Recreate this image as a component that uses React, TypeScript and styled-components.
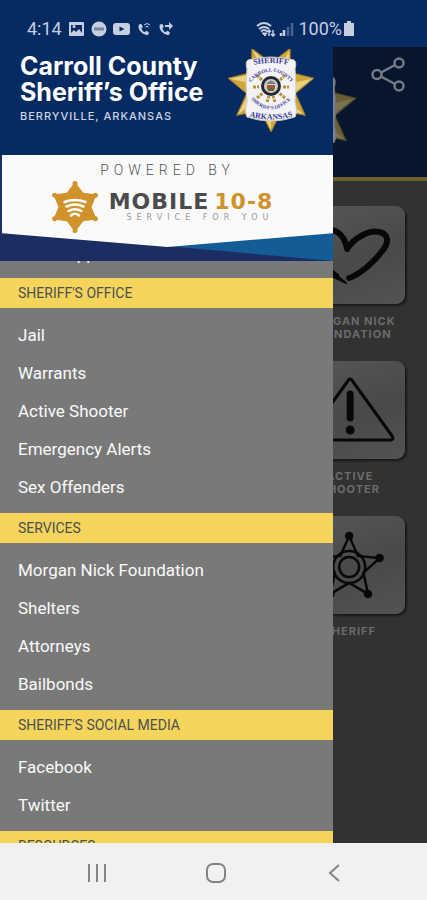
import React from "react";
import styled, { createGlobalStyle } from "styled-components";

const GlobalStyle = createGlobalStyle`
  *, *::before, *::after { box-sizing: border-box; }
  body {
    margin: 0;
    background: #323232;
    font-family: Roboto, "Liberation Sans", sans-serif;
  }
`;

const colors = {
  navy: "#062a62",
  gold: "#f5d45c",
  drawer: "#797979",
  status: "#c6cee0",
};

const Screen = styled.div`
  display: flex;
  flex-direction: column;
  height: 100vh;
  overflow: hidden;
`;

const StatusBar = styled.header`
  display: flex;
  align-items: center;
  justify-content: space-between;
  flex: none;
  height: 47px;
  padding: 10px 72px 0 27px;
  background: ${colors.navy};
  color: ${colors.status};
  font-size: 18px;
  line-height: 20px;
`;

const StatusGroup = styled.div<{ $gap: number }>`
  display: flex;
  align-items: center;
  gap: ${(p) => p.$gap}px;
`;

const Battery = styled.div`
  display: flex;
  align-items: center;
  gap: 1px;
`;

const Stage = styled.div`
  position: relative;
  flex: 1;
  min-height: 0;
  overflow: hidden;
`;

const Home = styled.main`
  height: 100%;
  background: #323232;
`;

const HomeHeader = styled.div`
  position: relative;
  display: flex;
  justify-content: flex-end;
  align-items: flex-start;
  height: 134px;
  padding: 9px 20px 0;
  border-bottom: 4px solid #6d5f2b;
  background: #07152d;
  overflow: hidden;
`;

const HomeBadge = styled.div`
  position: absolute;
  top: 18px;
  right: 70px;
  width: 100px;
  opacity: 0.5;
`;

const IconButton = styled.button`
  display: flex;
  padding: 0;
  border: 0;
  background: none;
  color: #747b87;
`;

const Tiles = styled.div`
  display: grid;
  grid-template-columns: repeat(3, minmax(0, 1fr));
  gap: 20px 26px;
  padding: 25px 22px;
`;

const Tile = styled.button`
  grid-column: 3;
  display: flex;
  flex-direction: column;
  align-items: center;
  gap: 11px;
  min-height: 135px;
  padding: 0;
  border: 0;
  background: none;
  color: #6b6b6b;
  font-family: Inter, sans-serif;
  font-size: 11px;
  font-weight: 700;
  line-height: 13px;
  letter-spacing: 1px;
  white-space: pre-line;
`;

const TileFace = styled.span`
  display: block;
  width: 100%;
  height: 98px;
  border-radius: 9px;
  background: linear-gradient(160deg, #565858, #484a4a 55%, #525454);
  box-shadow: 2px 2px 2px #1a1a1a;
`;

const Drawer = styled.aside`
  position: absolute;
  top: 0;
  bottom: 0;
  left: 0;
  display: flex;
  flex-direction: column;
  width: 78%;
  background: ${colors.drawer};
`;

const DrawerHeader = styled.div`
  display: flex;
  justify-content: space-between;
  flex: none;
  height: 108px;
  padding: 2px 18px 0 20px;
  background: ${colors.navy};
  color: #fff;
`;

const Titles = styled.div`
  padding-top: 4px;
  font-family: Inter, sans-serif;
  white-space: nowrap;
`;

const Title = styled.h1`
  margin: 0;
  font-size: 25px;
  font-weight: 700;
  line-height: 26px;
`;

const Place = styled.p`
  margin: 3px 0 0;
  color: #ccd4e4;
  font-size: 11px;
  font-weight: 500;
  line-height: 16px;
  letter-spacing: 1px;
`;

const DrawerBadge = styled.div`
  flex: none;
  width: 88px;
  margin-left: -20px;
`;

const Banner = styled.section`
  position: relative;
  flex: none;
  height: 106px;
  background: #1b2d63;
  &::before {
    content: "";
    position: absolute;
    inset: 76px 0 0 50%;
    background: #145c96;
    clip-path: polygon(0 50%, 100% 0, 100% 100%);
  }
`;

const BannerPaper = styled.div`
  position: relative;
  display: flex;
  flex-direction: column;
  align-items: center;
  height: 92px;
  margin-left: 2px;
  padding-top: 6px;
  background: #fafafa;
  clip-path: polygon(0 0, 100% 0, 100% 85%, 50% 100%, 0 85%);
`;

const Powered = styled.p`
  margin: 0;
  color: #555;
  font-size: 14px;
  font-weight: 300;
  line-height: 18px;
  letter-spacing: 5px;
`;

const Brand = styled.div`
  display: flex;
  align-items: center;
  gap: 9px;
  margin-top: 1px;
  padding-right: 12px;
`;

const BrandText = styled.div`
  display: flex;
  flex-direction: column;
  align-items: flex-end;
  font-family: "DejaVu Sans", sans-serif;
`;

const BrandName = styled.div`
  color: #4b4b4d;
  font-size: 22px;
  font-weight: 700;
  line-height: 22px;
  letter-spacing: 1px;
  white-space: nowrap;
`;

const BrandCode = styled.span`
  margin-left: 5px;
  color: #d0922a;
`;

const Slogan = styled.div`
  color: #999;
  font-size: 8px;
  line-height: 10px;
  letter-spacing: 5px;
  white-space: nowrap;
`;

const Menu = styled.nav`
  flex: 1;
  min-height: 0;
  overflow: hidden;
`;

const MenuScroll = styled.div`
  margin-top: -26px;
`;

const SectionTitle = styled.h2`
  margin: 0;
  padding: 0 18px;
  background: ${colors.gold};
  color: #4b5052;
  font-size: 14px;
  font-weight: 400;
  line-height: 30px;
`;

const Items = styled.ul<{ $first?: boolean }>`
  margin: 0;
  padding: ${(p) => (p.$first ? "0 0 5px" : "8px 0 7px")};
  list-style: none;
`;

const ItemLink = styled.a`
  display: block;
  padding: 0 18px;
  color: #fafafa;
  font-size: 17px;
  line-height: 38px;
  text-decoration: none;
`;

const NavBar = styled.footer`
  display: flex;
  justify-content: center;
  flex: none;
  height: 57px;
  padding: 2px 0 0 4px;
  background: #f1f1f1;
`;

const NavButton = styled.button`
  display: flex;
  align-items: center;
  justify-content: center;
  width: 28%;
  padding: 0;
  border: 0;
  background: none;
  color: #848484;
`;

function starPoints(cx: number, cy: number, outer: number, inner: number, tips: number, start = -90) {
  const points: string[] = [];
  for (let i = 0; i < tips * 2; i++) {
    const r = i % 2 ? inner : outer;
    const a = ((start + (i * 180) / tips) * Math.PI) / 180;
    points.push(`${(cx + r * Math.cos(a)).toFixed(1)},${(cy + r * Math.sin(a)).toFixed(1)}`);
  }
  return points.join(" ");
}

function BadgeLettering() {
  return (
    <>
      <defs>
        <path id="badge-top" d="M22 17 Q44 11 66 17" />
        <path id="badge-county" d="M23 34 Q44 11 65 34" />
        <path id="badge-office" d="M21 47 Q44 74 67 47" />
        <path id="badge-state" d="M21 67 Q44 74 67 67" />
      </defs>
      <g fill="#3a3a9b" fontFamily="Liberation Serif, serif" fontWeight="700" textAnchor="middle">
        <text fontSize="8"><textPath href="#badge-top" startOffset="50%">SHERIFF</textPath></text>
        <text fontSize="5"><textPath href="#badge-county" startOffset="50%">CARROLL COUNTY</textPath></text>
        <text fontSize="5"><textPath href="#badge-office" startOffset="50%">SHERIFF'S OFFICE</textPath></text>
        <text fontSize="8"><textPath href="#badge-state" startOffset="50%">ARKANSAS</textPath></text>
      </g>
    </>
  );
}

function SheriffBadge({ lettering }: { lettering?: boolean }) {
  const rays = [0, 1, 2, 3, 4, 5, 6];
  return (
    <svg viewBox="0 0 88 84" width="100%" role="img" aria-label="Sheriff badge">
      <polygon points={starPoints(44, 39, 44, 25, 7, 90)} fill="#cfa63c" stroke="#9a7a2d" strokeWidth="1" />
      {rays.map((i) => {
        const a = ((90 + (i * 360) / 7) * Math.PI) / 180;
        return (
          <path
            key={i}
            d={`M44 39 L${44 + 42 * Math.cos(a)} ${39 + 42 * Math.sin(a)} L${44 + 23 * Math.cos(a + 0.45)} ${39 + 23 * Math.sin(a + 0.45)}Z`}
            fill="#ecd382"
          />
        );
      })}
      <path
        d="M21 11 Q44 5 67 11 Q70 13 68 20 Q70 38 68 53 Q71 62 68 68 Q44 76 20 68 Q17 62 20 53 Q18 38 20 20 Q18 13 21 11Z"
        fill="#f3f2f5"
        stroke="#cfc9bd"
        strokeWidth="1"
      />
      <g stroke="#b8923a" strokeWidth="3" strokeDasharray="3 1">
        <path d="M30 26l5 5M58 26l-5 5M26 38h6M56 38h6M30 49l6-5M58 49l-6-5M40 53l2-6M48 53l-2-6" />
      </g>
      <circle cx="44" cy="37" r="10" fill="#242937" />
      <circle cx="44" cy="37" r="7" fill="#d8d0bd" />
      <path d="M40 36h8v4q-4 4-8 0z" fill="#a65342" />
      <path d="M39 35q5-7 10 0z" fill="#69859b" />
      <path d="M41 39h6v3h-6z" fill="#586d3d" />
      {lettering && <BadgeLettering />}
    </svg>
  );
}

function BrandStar() {
  const tips = [0, 1, 2, 3, 4, 5].map((i) => ((-90 + i * 60) * Math.PI) / 180);
  return (
    <svg width="50" height="54" viewBox="0 0 50 54" aria-hidden="true">
      <g fill="#d0922a">
        <polygon points={starPoints(25, 27, 25, 16.5, 6)} />
        {tips.map((a) => (
          <circle key={a} cx={25 + 23.500 * Math.cos(a)} cy={27 + 23.500 * Math.sin(a)} r="2.5" />
        ))}
      </g>
      <g fill="none" stroke="#fff" strokeWidth="2.5" strokeLinecap="round">
        <path d="M14.500 22Q25 18 35.500 22M16.500 26.500Q25 22.500 33.500 26.500M18.500 31Q25 27.500 31.500 31M21 35.500Q25 32 29 35.500" />
      </g>
    </svg>
  );
}

const PHONE = "M2 2l3-1 2 4-2 1q1 4 4 5l2-2 3 2-1 3q-4 1-8-3T2 2z";

function StatusIcons() {
  return (
    <svg width="106" height="16" viewBox="0 0 106 16" fill="currentColor" aria-hidden="true">
      <rect x="0" y="1" width="15" height="14" rx="1" />
      <path d="M2 12V4h11v8l-3-4-3 3-2-2z" fill={colors.navy} />
      <circle cx="5" cy="5.500" r="1.500" />
      <circle cx="30" cy="8" r="7.500" />
      <path d="M25 6.500h10v3H25z" fill="#7783a2" />
      <rect x="44" y="2" width="17" height="12" rx="3" />
      <path d="M50.500 5.500v5l5-2.500z" fill={colors.navy} />
      <path transform="translate(68 2) scale(.85)" d={PHONE} />
      <path d="M75 4q3-3 6 0M76.500 6q1.500-1.500 3 0" fill="none" stroke="currentColor" />
      <path transform="translate(89 2) scale(.85)" d={PHONE} />
      <path d="M96 4h4V1l4 4-4 4V6h-4z" />
    </svg>
  );
}

function SignalIcons() {
  return (
    <svg width="38" height="16" viewBox="0 0 38 16" fill="none" stroke="currentColor" aria-hidden="true">
      <path d="M1 5q7-6 14 0M3 8q5-4 10 0M5 10.500q3-3 6 0" strokeWidth="2" />
      <path d="M6 12l3 3 2-3z" fill="currentColor" />
      <path d="M13 15V9m-2 2l2-2 2 2M17 9v6m-2-2l2 2 2-2" strokeWidth="1.500" />
      <path d="M25 15v-3M28 15v-6" strokeWidth="2.500" />
      <path d="M32 15V6M36 15V2" strokeWidth="2.500" opacity=".35" />
    </svg>
  );
}

function BatteryIcon() {
  return (
    <svg width="12" height="16" viewBox="0 0 12 16" fill="currentColor" aria-hidden="true">
      <path d="M4 0h4v2h3v13H1V2h3z" />
    </svg>
  );
}

function ShareIcon() {
  return (
    <svg width="36" height="36" viewBox="0 0 36 36" fill="none" stroke="currentColor" strokeWidth="2.500" aria-hidden="true">
      <circle cx="6" cy="18.500" r="4.500" />
      <circle cx="28" cy="7" r="4.500" />
      <circle cx="28" cy="30" r="4.500" />
      <path d="M10 16.500L24 9M10 20.500L24 28" />
    </svg>
  );
}

const HeartArt = () => (
  <g fill="none" stroke="#080808" strokeLinecap="round" strokeLinejoin="round">
    <path strokeWidth="6" d="M52 43C49 28 39 20 28 26C10 35 24 59 41 70M52 43C59 31 75 24 84 26C94 28 94 37 87 45C78 57 65 68 54 72" />
    <path strokeWidth="2" fill="#080808" d="M37 65Q45 73 51 77Q43 74 36 69z" />
  </g>
);

const AlertArt = () => (
  <g fill="none" stroke="#080808" strokeLinecap="round" strokeLinejoin="round">
    <path strokeWidth="3" d="M52 21Q55 15 58 21L97 75Q99 79 95 79H15Q11 79 13 75Z" />
    <path strokeWidth="7" d="M55 33V57" />
    <circle cx="55" cy="69" r="4.500" fill="#080808" stroke="none" />
  </g>
);

const StarArt = () => {
  const tips = [0, 1, 2, 3, 4].map((i) => ((-90 + i * 72) * Math.PI) / 180);
  return (
    <g fill="none" stroke="#080808" strokeWidth="2.500">
      <polygon points={starPoints(54, 52, 32, 15, 5)} />
      <circle cx="54" cy="51" r="16" />
      <circle cx="54" cy="51" r="10" />
      {tips.map((a) => (
        <circle key={a} cx={54 + 32 * Math.cos(a)} cy={52 + 32 * Math.sin(a)} r="3" fill="#080808" />
      ))}
    </g>
  );
};

const tiles = [
  { label: "MORGAN NICK\nFOUNDATION", Art: HeartArt },
  { label: "ACTIVE\nSHOOTER", Art: AlertArt },
  { label: "SHERIFF", Art: StarArt },
];

const sections = [
  { title: "SHERIFF'S OFFICE", items: ["Jail", "Warrants", "Active Shooter", "Emergency Alerts", "Sex Offenders"] },
  { title: "SERVICES", items: ["Morgan Nick Foundation", "Shelters", "Attorneys", "Bailbonds"] },
  { title: "SHERIFF'S SOCIAL MEDIA", items: ["Facebook", "Twitter"] },
  { title: "RESOURCES", items: [] },
];

export default function App() {
  return (
    <Screen>
      <GlobalStyle />
      <StatusBar>
        <StatusGroup $gap={7}>
          <span>4:14</span>
          <StatusIcons />
        </StatusGroup>
        <StatusGroup $gap={4}>
          <SignalIcons />
          <Battery>
            <span>100%</span>
            <BatteryIcon />
          </Battery>
        </StatusGroup>
      </StatusBar>
      <Stage>
        <Home>
          <HomeHeader>
            <HomeBadge><SheriffBadge /></HomeBadge>
            <IconButton aria-label="Share"><ShareIcon /></IconButton>
          </HomeHeader>
          <Tiles>
            {tiles.map(({ label, Art }) => (
              <Tile key={label}>
                <TileFace>
                  <svg width="100%" height="98" viewBox="0 0 110 98" aria-hidden="true"><Art /></svg>
                </TileFace>
                {label}
              </Tile>
            ))}
          </Tiles>
        </Home>
        <Drawer>
          <DrawerHeader>
            <Titles>
              <Title>Carroll County<br />Sheriff’s Office</Title>
              <Place>BERRYVILLE, ARKANSAS</Place>
            </Titles>
            <DrawerBadge><SheriffBadge lettering /></DrawerBadge>
          </DrawerHeader>
          <Banner>
            <BannerPaper>
              <Powered>POWERED BY</Powered>
              <Brand>
                <BrandStar />
                <BrandText>
                  <BrandName>MOBILE<BrandCode>10-8</BrandCode></BrandName>
                  <Slogan>SERVICE FOR YOU</Slogan>
                </BrandText>
              </Brand>
            </BannerPaper>
          </Banner>
          <Menu aria-label="Main menu">
            <MenuScroll>
              <Items $first>
                <li><ItemLink href="#share-app">Share App</ItemLink></li>
              </Items>
              {sections.map((section) => (
                <section key={section.title}>
                  <SectionTitle>{section.title}</SectionTitle>
                  <Items>
                    {section.items.map((item) => (
                      <li key={item}>
                        <ItemLink href={`#${item.toLowerCase().replace(/ /g, "-")}`}>{item}</ItemLink>
                      </li>
                    ))}
                  </Items>
                </section>
              ))}
            </MenuScroll>
          </Menu>
        </Drawer>
      </Stage>
      <NavBar>
        <NavButton aria-label="Recent apps">
          <svg width="18" height="18" viewBox="0 0 18 18" fill="none" stroke="currentColor" strokeWidth="2">
            <path d="M1 0v18M9 0v18M17 0v18" />
          </svg>
        </NavButton>
        <NavButton aria-label="Home">
          <svg width="20" height="20" viewBox="0 0 20 20" fill="none" stroke="currentColor" strokeWidth="2">
            <rect x="1" y="1" width="18" height="18" rx="6" />
          </svg>
        </NavButton>
        <NavButton aria-label="Back">
          <svg width="12" height="18" viewBox="0 0 12 18" fill="none" stroke="currentColor" strokeWidth="2">
            <path d="M11 1L2 9l9 8" />
          </svg>
        </NavButton>
      </NavBar>
    </Screen>
  );
}
